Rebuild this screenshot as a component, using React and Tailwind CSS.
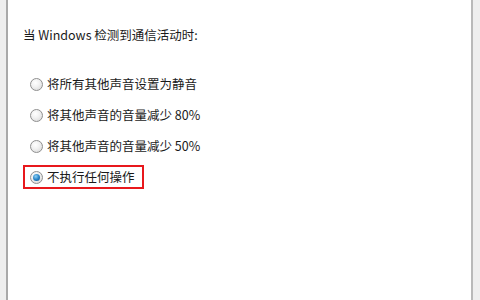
import React from "react";

function Radio({ checked }) {
  return (
    <span className="relative inline-block w-[13px] h-[13px] rounded-full border border-[#8f8f8f] bg-[radial-gradient(circle_at_40%_35%,#ffffff_0%,#f2f2f2_40%,#d4d4d4_100%)] shrink-0">
      {checked && (
        <span className="absolute left-[2px] top-[2px] w-[7px] h-[7px] rounded-full bg-[radial-gradient(circle_at_40%_35%,#8fd0f5_0%,#2a86c8_50%,#0f4f8a_100%)]" />
      )}
    </span>
  );
}

function Row({ label, checked, boxed }) {
  if (boxed) {
    return (
      <div className="flex items-center h-[24px] w-[121px] border-2 border-[#e8181c] pl-[5px] gap-[4px]">
        <Radio checked={checked} />
        <span>{label}</span>
      </div>
    );
  }
  return (
    <div className="flex items-center h-[24px] pl-[7px] gap-[4px]">
      <Radio checked={checked} />
      <span>{label}</span>
    </div>
  );
}

export default function App() {
  return (
    <div
      className="w-[480px] h-[300px] flex bg-[#f0f0f0] text-[12.5px] text-[#1a1a1a]"
      style={{ fontFamily: '"Microsoft YaHei", "Noto Sans CJK SC", sans-serif' }}
    >
      <div className="w-[6px] bg-[#eeeeee]" />
      <div className="w-[2px] bg-[#a9a9a9]" />
      <div className="flex-1 bg-white pl-[15px] pt-[26px] flex flex-col">
        <div className="h-[18px] leading-[18px]">当 Windows 检测到通信活动时:</div>
        <div className="flex flex-col mt-[28px] gap-[7px]">
          <Row label="将所有其他声音设置为静音" />
          <Row label="将其他声音的音量减少 80%" />
          <Row label="将其他声音的音量减少 50%" />
          <Row label="不执行任何操作" checked boxed />
        </div>
      </div>
      <div className="w-[2px] bg-[#b9b9b9]" />
      <div className="w-[7px] bg-[#eeeeee]" />
    </div>
  );
}
